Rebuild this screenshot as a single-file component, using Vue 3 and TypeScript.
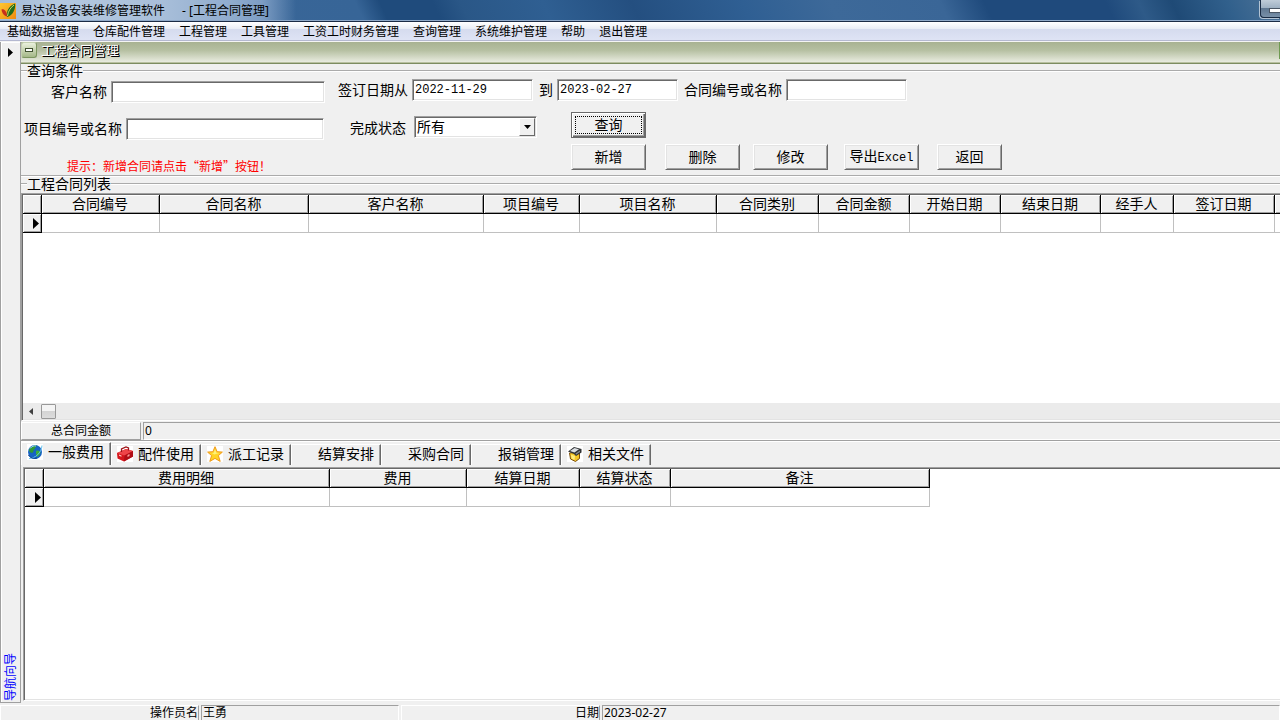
<script setup lang="ts">
import { ref } from 'vue'

interface Column {
  title: string
  width: number
}

const menus: string[] = [
  '基础数据管理', '仓库配件管理', '工程管理', '工具管理', '工资工时财务管理',
  '查询管理', '系统维护管理', '帮助', '退出管理',
]

const contractColumns: Column[] = [
  { title: '合同编号', width: 118 },
  { title: '合同名称', width: 149 },
  { title: '客户名称', width: 175 },
  { title: '项目编号', width: 96 },
  { title: '项目名称', width: 137 },
  { title: '合同类别', width: 102 },
  { title: '合同金额', width: 91 },
  { title: '开始日期', width: 91 },
  { title: '结束日期', width: 100 },
  { title: '经手人', width: 73 },
  { title: '签订日期', width: 101 },
  { title: '', width: 100 },
]

const feeColumns: Column[] = [
  { title: '费用明细', width: 286 },
  { title: '费用', width: 137 },
  { title: '结算日期', width: 113 },
  { title: '结算状态', width: 91 },
  { title: '备注', width: 259 },
]

const tabs = [
  { label: '一般费用', icon: 'globe' },
  { label: '配件使用', icon: 'toolbox' },
  { label: '派工记录', icon: 'star' },
  { label: '结算安排', icon: '' },
  { label: '采购合同', icon: '' },
  { label: '报销管理', icon: '' },
  { label: '相关文件', icon: 'box' },
]

const activeTab = ref(0)
const customer = ref('')
const project = ref('')
const contract = ref('')
const dateFrom = ref('2022-11-29')
const dateTo = ref('2023-02-27')
const status = ref('所有')

const tableWidth = (cols: Column[]): number => cols.reduce((sum, c) => sum + c.width, 19)
</script>

<template>
  <div class="window">
    <header class="titlebar">
      <svg class="app-icon" width="16" height="16" viewBox="0 0 16 16" aria-hidden="true">
        <defs>
          <linearGradient id="appbg" x1="0" y1="0" x2="1" y2="1">
            <stop offset="0" stop-color="#ffc62e" />
            <stop offset="1" stop-color="#ee8a10" />
          </linearGradient>
        </defs>
        <rect width="16" height="16" fill="url(#appbg)" />
        <path d="M1.500 6.500C4 5.500 6.500 8 7.500 13.500 4.500 13.500 2 10.500 1.500 6.500z" fill="#c8301c" />
        <path d="M7 14C6 8.500 9 2.500 15 .5c1 5-2 12-8 13.500z" fill="#226a1a" />
        <path d="M7.500 13C8 8.500 10.500 4.500 14 2" stroke="#c4dc60" stroke-width="1" fill="none" />
      </svg>
      <h1 class="title"><span>易达设备安装维修管理软件</span><span>- [工程合同管理]</span></h1>
      <button class="minimize" type="button" aria-label="最小化"><i></i></button>
    </header>

    <nav class="menubar">
      <button v-for="m in menus" :key="m" type="button" class="menu">{{ m }}</button>
    </nav>

    <div class="body">
      <aside class="rail">
        <button type="button" class="rail-arrow" aria-label="展开">
          <svg width="5" height="9" viewBox="0 0 5 9"><path d="M0 0l5 4.500L0 9z" fill="#000" /></svg>
        </button>
        <a href="#" class="rail-link">导航向导</a>
      </aside>

      <main class="main">
        <div class="page-head">
          <button type="button" class="collapse" aria-label="折叠"><i></i></button>
          <h2>工程合同管理</h2>
          <span class="page-end"></span>
        </div>

        <fieldset class="group query">
          <legend>查询条件</legend>
          <form class="form" @submit.prevent>
            <div class="form-left">
              <div class="field customer">
                <label for="customer">客户名称</label>
                <input id="customer" v-model="customer" type="text" class="box" />
              </div>
              <div class="field project">
                <label for="project">项目编号或名称</label>
                <input id="project" v-model="project" type="text" class="box" />
              </div>
              <p class="hint">提示：新增合同请点击“新增”按钮！</p>
            </div>
            <div class="form-right">
              <div class="line">
                <label for="from">签订日期从</label>
                <input id="from" v-model="dateFrom" type="text" class="box date" />
                <label for="to" class="spaced">到</label>
                <input id="to" v-model="dateTo" type="text" class="box date" />
                <label for="contract" class="spaced">合同编号或名称</label>
                <input id="contract" v-model="contract" type="text" class="box date" />
              </div>
              <div class="line second">
                <label for="status">完成状态</label>
                <div class="select">
                  <select id="status" v-model="status" class="box">
                    <option>所有</option>
                    <option>已完成</option>
                    <option>未完成</option>
                  </select>
                  <span class="drop" aria-hidden="true">
                    <svg width="7" height="4" viewBox="0 0 7 4"><path d="M0 0h7L3.500 4z" fill="#000" /></svg>
                  </span>
                </div>
                <button type="submit" class="btn default"><span>查询</span></button>
              </div>
              <div class="actions">
                <button type="button" class="btn">新增</button>
                <button type="button" class="btn">删除</button>
                <button type="button" class="btn">修改</button>
                <button type="button" class="btn">导出<span class="latin">Excel</span></button>
                <button type="button" class="btn small">返回</button>
              </div>
            </div>
          </form>
        </fieldset>

        <fieldset class="group list">
          <legend>工程合同列表</legend>
          <div class="grid contracts">
            <table :style="{ width: tableWidth(contractColumns) + 'px' }">
              <colgroup>
                <col class="marker" />
                <col v-for="(c, i) in contractColumns" :key="i" :style="{ width: c.width + 'px' }" />
              </colgroup>
              <thead>
                <tr>
                  <th></th>
                  <th v-for="(c, i) in contractColumns" :key="i">{{ c.title }}</th>
                </tr>
              </thead>
              <tbody>
                <tr>
                  <th class="current">
                    <svg width="6" height="11" viewBox="0 0 6 11"><path d="M0 0l6 5.500L0 11z" fill="#000" /></svg>
                  </th>
                  <td v-for="(c, i) in contractColumns" :key="i"></td>
                </tr>
              </tbody>
            </table>
            <div class="scroll">
              <svg width="4" height="7" viewBox="0 0 4 7"><path d="M4 0L0 3.500 4 7z" fill="#404040" /></svg>
              <span class="thumb"></span>
            </div>
          </div>
        </fieldset>

        <div class="total">
          <span class="total-label">总合同金额</span>
          <output class="total-value">0</output>
        </div>

        <section class="detail">
          <div class="tabs" role="tablist">
            <button
              v-for="(t, i) in tabs"
              :key="t.label"
              type="button"
              role="tab"
              class="tab"
              :class="{ active: i === activeTab }"
              :aria-selected="i === activeTab"
              @click="activeTab = i"
            >
              <svg class="tab-icon" width="16" height="16" viewBox="0 0 16 16" aria-hidden="true">
                <g v-if="t.icon === 'globe'">
                  <rect width="16" height="16" fill="#fff" />
                  <circle cx="8" cy="8" r="7" fill="#1763c4" />
                  <path d="M2 6C3 2.500 7 1 10 1.500 8 3 9 4 7 5.500 6 7 7 8 5 9 3.500 8.500 2 8 2 6z" fill="#2e9a38" />
                  <path d="M9 7c2-1 4 0 4.500 1.500-.5 2-2 4-3.500 4.500-1-1.500 0-2-1-3.500z" fill="#3cae3a" />
                  <path d="M3 4.500C5 2 7 1.500 9 2" stroke="#9fdcff" fill="none" />
                  <path d="M2 14.500C8 14.500 14.500 9 15 1.500" stroke="#64c4ee" stroke-width="1" fill="none" />
                  <path d="M1.500 11C3 14 7 15 10 14" stroke="#0b3c8a" fill="none" />
                </g>
                <g v-else-if="t.icon === 'toolbox'">
                  <rect width="16" height="16" fill="#fff" />
                  <path d="M0 7l9-4 7 2v5.500L7 15.500.5 12.500z" fill="#d4161c" />
                  <path d="M0 7l9-4 7 2-8.500 4.500z" fill="#ee4448" />
                  <path d="M7.500 9.500L16 5v5.500l-9 5z" fill="#b00e16" />
                  <path d="M4.500 6V3L9 1l2.500 1v2.500" stroke="#9c1418" stroke-width="1.300" fill="none" />
                  <path d="M2 8.500l2.500 1v1.200L2 9.800z" fill="#ffc8c0" />
                  <path d="M10.500 9l2-1v2l-2 1z" fill="#f8a09c" />
                </g>
                <g v-else-if="t.icon === 'star'">
                  <rect width="16" height="16" fill="#fff" />
                  <path d="M8 .7l2.100 5 5.300.4-4 3.500 1.800 5.800L8 12.400l-5.200 3 1.800-5.800-4-3.500 5.300-.4z" fill="#ffd426" stroke="#f09a1c" />
                  <path d="M8 3l1.300 3.700 3 .4-5 1.500-2.500-1.500 2-.4z" fill="#fff07a" />
                </g>
                <g v-else-if="t.icon === 'box'">
                  <rect width="16" height="16" fill="#fff" />
                  <path d="M2.500 7l1 6 5 2.500 4-3V6z" fill="#f5c526" stroke="#7a4e0c" />
                  <path d="M4 8.500l4 1.500-.5 4L4.500 12.500z" fill="#ffed7c" />
                  <path d="M1 5.500L7 1l7.500 2v3.500L9 10 7 8z" fill="#303234" />
                  <path d="M3 5l4.500-3L12 3.200 7.500 6.500z" fill="#dce0e4" />
                  <path d="M8.500 7.500L13 4.500V6L9 8.800z" fill="#8c9094" />
                </g>
              </svg>
              <span>{{ t.label }}</span>
            </button>
          </div>
          <div class="grid fees">
            <table :style="{ width: tableWidth(feeColumns) + 'px' }">
              <colgroup>
                <col class="marker" />
                <col v-for="c in feeColumns" :key="c.title" :style="{ width: c.width + 'px' }" />
              </colgroup>
              <thead>
                <tr>
                  <th></th>
                  <th v-for="c in feeColumns" :key="c.title">{{ c.title }}</th>
                </tr>
              </thead>
              <tbody>
                <tr>
                  <th class="current">
                    <svg width="6" height="11" viewBox="0 0 6 11"><path d="M0 0l6 5.500L0 11z" fill="#000" /></svg>
                  </th>
                  <td v-for="c in feeColumns" :key="c.title"></td>
                </tr>
              </tbody>
            </table>
          </div>
        </section>
      </main>
    </div>

    <footer class="statusbar">
      <span class="cell caption">操作员名</span>
      <span class="cell value">王勇</span>
      <span class="cell caption">日期</span>
      <span class="cell value wide">2023-02-27</span>
    </footer>
  </div>
</template>

<style>
html,
body {
  margin: 0;
  background: #f0f0f0;
}
</style>

<style scoped>
* {
  box-sizing: border-box;
}

.window {
  display: flex;
  flex-direction: column;
  height: 100vh;
  overflow: hidden;
  background: #f0f0f0;
  color: #000;
  font: 14px/16px "Liberation Sans", "Noto Sans CJK SC", sans-serif;
}

button,
input,
select {
  margin: 0;
  border: 0;
  padding: 0;
  border-radius: 0;
  background: none;
  color: inherit;
  font: inherit;
}

.titlebar {
  display: flex;
  flex: none;
  align-items: center;
  height: 22px;
  border-bottom: 1px solid #1b2b45;
  box-shadow: inset 0 -1px #8fa9c8;
  background:
    linear-gradient(90deg, #a4bbd6 0, #b4c8df 60px, #a9bfda 160px, #90acce 230px, #7d9dc4 262px, rgba(60, 100, 150, 0) 296px),
    linear-gradient(65deg, #3c6798 0, #376597 330px, #1f4b7c 352px, #1f4b7c 400px, #2a5787 425px, #2f5f92 500px, #244f80 580px, #2f5f93 680px, #3d6999 760px, #3a6697 860px, #1f4a7c 900px, #1f4a7c 1010px, #2e5a88 1040px, #1f4a76 1070px, #31608c 1120px, #5f7f9f 1200px, #8299af 100%);
}

.title {
  display: flex;
  flex: 1;
  gap: 17px;
  margin: 0 0 0 5px;
  font: 12px/20px "Noto Sans", "Noto Sans CJK SC", sans-serif;
  white-space: pre;
}

.app-icon {
  flex: none;
}

.minimize {
  align-self: flex-start;
  width: 20px;
  height: 18px;
  border: 1px solid #1a2c44;
  border-width: 0 0 1px 1px;
  border-bottom-left-radius: 4px;
  padding: 0 0 0 8px;
  background: linear-gradient(#c0ccd8 0, #9eb0c2 8px, #5e7690 8px, #7890a8 100%);
  box-shadow: -1px 1px #b4c4d4;
}

.minimize i {
  display: block;
  height: 5px;
  margin-top: 4px;
  border: 1px solid #4a5664;
  border-right: 0;
  background: #fff;
}

.menubar {
  display: flex;
  flex: none;
  gap: 14px;
  height: 20px;
  border-bottom: 1px solid #f4f4f4;
  box-shadow: inset 0 -1px #b4b8d0;
  padding-left: 7px;
  background: linear-gradient(#fff 0, #e8ecf5 7px, #d5dbee 7px, #dfe4f5 100%);
}

.menu {
  font-size: 12px;
  line-height: 18px;
}

.body {
  display: flex;
  flex: 1;
  min-height: 0;
}

.rail {
  display: flex;
  flex: none;
  flex-direction: column;
  align-items: center;
  justify-content: space-between;
  width: 21px;
  border: 1px solid #a0a0a0;
  border-top: 0;
  box-shadow: inset 1px 1px #fff;
  padding: 6px 0 1px;
}

.rail-arrow {
  line-height: 9px;
}

.rail-arrow svg {
  display: block;
}

.rail-link {
  color: #00f;
  font-size: 12px;
  line-height: 16px;
  text-decoration: none;
  writing-mode: vertical-rl;
  text-orientation: sideways;
  transform: rotate(180deg);
}

.main {
  display: flex;
  flex: 1;
  flex-direction: column;
  min-width: 0;
}

.page-head {
  display: flex;
  flex: none;
  height: 22px;
  border-bottom: 1px solid #7c8c60;
  box-shadow: inset 0 -1px #b8c0a0;
  background: linear-gradient(#a8b292, #b6c0a2 40%, #e8ebdf 95%);
}

.page-head h2 {
  flex: 1;
  margin: 0 0 0 4px;
  color: #fff;
  font-size: 13px;
  font-weight: 400;
  line-height: 18px;
  text-shadow: 1px 1px #000, 1px 0 #000;
}

.collapse {
  width: 16px;
  height: 16px;
  border: 1px solid #7d9660;
  border-top-color: #c4d0b0;
  border-left-color: #c4d0b0;
  border-radius: 3px;
  padding: 0 3px;
  background: linear-gradient(#eaf0dc, #a5b888);
}

.collapse i {
  display: block;
  height: 4px;
  border: 1px solid #405030;
  background: #fff;
}

.page-end {
  width: 1px;
  height: 17px;
  background: #6f9a52;
}

.group {
  flex: none;
  min-width: 0;
  margin: 0;
  border: 0 solid #fff;
  border-top: 2px groove #fff;
  padding: 0;
}

.group legend {
  margin-left: 6px;
  padding: 0;
  line-height: 14px;
}

.query {
  height: 113px;
  border-bottom: 2px groove #fff;
}

.form {
  display: flex;
}

.form-left {
  flex: none;
  width: 317px;
  padding-top: 2px;
}

.form-right {
  flex: 1;
  padding-top: 1px;
}

.field,
.line {
  display: flex;
  align-items: center;
  gap: 4px;
}

.field label {
  line-height: 24px;
}

.customer {
  padding: 0 13px 0 30px;
}

.project {
  margin-top: 13px;
  padding: 0 14px 0 3px;
}

.field .box {
  flex: 1;
}

.box {
  min-width: 0;
  height: 22px;
  border: 1px solid;
  border-color: #a0a0a0 #fff #fff #a0a0a0;
  box-shadow: inset 1px 1px #696969, inset -1px -1px #e3e3e3;
  padding: 0 2px;
  background: #fff;
}

.date {
  width: 121px;
  font: 12px/18px "Liberation Mono", monospace;
}

.spaced {
  margin-left: 2px;
}

.hint {
  margin: 16px 0 0 46px;
  color: #f00;
  font: 12px/18px "Noto Sans CJK SC", sans-serif;
  white-space: nowrap;
}

.second {
  align-items: flex-end;
  gap: 8px;
  margin-top: 11px;
  padding-left: 12px;
}

.second label {
  line-height: 20px;
}

.select {
  position: relative;
  width: 123px;
  margin-right: 26px;
}

.select .box {
  display: block;
  width: 100%;
  appearance: none;
}

.drop {
  position: absolute;
  top: 2px;
  right: 2px;
  bottom: 2px;
  display: flex;
  align-items: center;
  justify-content: center;
  width: 16px;
  border: 1px solid;
  border-color: #fff #696969 #696969 #fff;
  background: #f0f0f0;
  pointer-events: none;
}

.btn {
  width: 75px;
  height: 26px;
  border: 1px solid;
  border-color: #fff #696969 #696969 #fff;
  box-shadow: inset 1px 1px #e3e3e3, inset -1px -1px #a0a0a0;
  background: #f0f0f0;
  white-space: nowrap;
}

.btn.default {
  border-color: #696969;
  box-shadow: inset 1px 1px #fff, inset -1px -1px #696969, inset -2px -2px #a0a0a0;
  padding: 3px;
}

.btn.default span {
  display: block;
  border: 1px dotted #000;
  line-height: 16px;
}

.btn.small {
  width: 65px;
}

.latin {
  font: 12px/16px "Liberation Mono", monospace;
}

.actions {
  display: grid;
  grid-template-columns: 94px 88px 91px 93px 65px;
  margin-top: 6px;
  padding-left: 233px;
}

.grid {
  overflow: hidden;
  border: 1px solid;
  border-color: #a0a0a0 #fff #fff #a0a0a0;
  border-right: 0;
  box-shadow: inset 1px 1px #696969, inset 0 -1px #e3e3e3;
  padding: 1px 0 0 1px;
  background: #fff;
}

.contracts {
  display: flex;
  flex-direction: column;
  justify-content: space-between;
  height: 228px;
  margin-top: 2px;
  padding-bottom: 1px;
}

.fees {
  flex: 1;
  margin: 2px 0 2px 2px;
}

table {
  flex: none;
  border-collapse: separate;
  border-spacing: 0;
  table-layout: fixed;
}

.marker {
  width: 19px;
}

th,
td {
  height: 19px;
  padding: 0;
  line-height: 16px;
  text-align: center;
}

th {
  border: solid #000;
  border-width: 0 1px 1px 0;
  box-shadow: inset 1px 1px #fff, inset -1px -1px #a0a0a0;
  padding-right: 1px;
  background: #f0f0f0;
  font-weight: 400;
}

td {
  border: solid #c0c0c0;
  border-width: 0 1px 1px 0;
}

.current svg {
  display: block;
  margin-left: 10px;
}

.scroll {
  display: flex;
  align-items: center;
  gap: 8px;
  height: 16px;
  padding-left: 6px;
  background: #ebebeb;
}

.thumb {
  width: 15px;
  height: 15px;
  border: 1px solid #989898;
  border-radius: 1px;
  background: linear-gradient(#f4f4f4 45%, #d4d4d4 50%, #dcdcdc);
}

.total {
  display: flex;
  flex: none;
  gap: 2px;
  height: 18px;
  margin: 1px 0 0;
  font: 12px/16px "Noto Sans", "Noto Sans CJK SC", sans-serif;
}

.total-label {
  width: 120px;
  border: 1px solid;
  border-color: #fff #a0a0a0 #a0a0a0 #fff;
  text-align: center;
}

.total-value {
  flex: 1;
  border: 1px solid;
  border-color: #a0a0a0 #fff #fff #a0a0a0;
  border-right: 0;
  padding-left: 1px;
}

.detail {
  display: flex;
  flex: 1;
  flex-direction: column;
  min-height: 0;
  border-top: 1px solid #a0a0a0;
  box-shadow: inset 0 1px #fff;
}

.tabs {
  display: flex;
  flex: none;
  align-items: flex-end;
  height: 24px;
}

.tab {
  display: flex;
  align-items: center;
  gap: 5px;
  width: 90px;
  height: 21px;
  border: solid;
  border-width: 1px 1px 0;
  border-color: #fff #696969 #fff #fff;
  box-shadow: inset -1px 0 #a0a0a0;
  padding: 0 0 2px 5px;
  white-space: nowrap;
}

.tab.active {
  height: 23px;
  padding-bottom: 4px;
}

.tab-icon {
  flex: none;
}

.statusbar {
  display: flex;
  flex: none;
  gap: 2px;
  padding-top: 2px;
  font: 12px/14px "Liberation Sans", "Noto Sans CJK SC", sans-serif;
}

.cell {
  width: 198px;
  border: 1px solid;
  border-bottom: 0;
}

.caption {
  width: 199px;
  border-color: #fff #a0a0a0 #fff #fff;
  text-align: right;
}

.value {
  border-color: #a0a0a0 #fff #fff #a0a0a0;
  padding-left: 1px;
}

.wide {
  flex: 1;
  font-family: "Noto Sans", sans-serif;
}
</style>
